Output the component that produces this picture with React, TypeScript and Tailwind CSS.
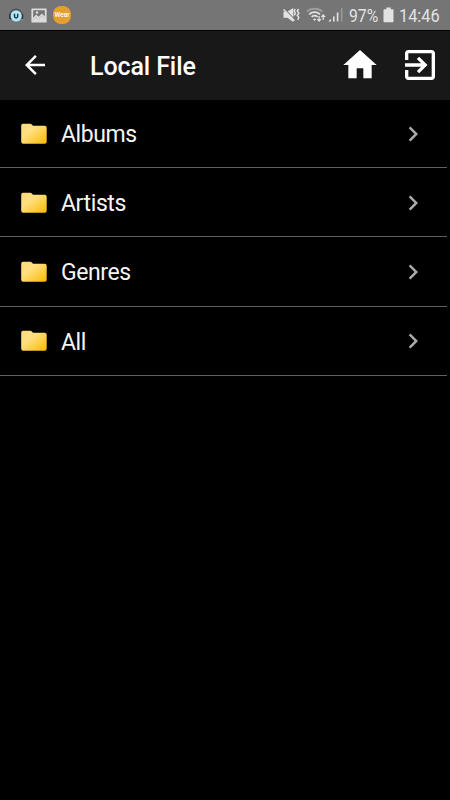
interface Folder {
  id: string;
  name: string;
}

const folders: Folder[] = [
  { id: 'albums', name: 'Albums' },
  { id: 'artists', name: 'Artists' },
  { id: 'genres', name: 'Genres' },
  { id: 'all', name: 'All' },
];

function HeadphonesIcon() {
  return (
    <svg className="h-4 w-4" viewBox="0 0 16 16">
      <path d="M2 8.500a6 6.500 0 0 1 12 0" fill="none" stroke="#484e52" strokeWidth="1.200" />
      <rect x="1" y="6.500" width="2.800" height="6" rx="1.400" fill="#30363a" />
      <rect x="12.500" y="6.500" width="2.800" height="6" rx="1.400" fill="#30363a" />
      <circle cx="8.200" cy="9" r="5.600" fill="#b4e6f8" />
      <path d="M6.500 6.800v2.500a1.600 1.600 0 0 0 3.200 0V6.800" fill="none" stroke="#163c55" strokeWidth="1.500" />
      <circle cx="13.800" cy="13" r="1.500" fill="#6e8792" />
    </svg>
  );
}

function PictureIcon() {
  return (
    <svg className="h-[15px] w-[16px]" viewBox="0 0 16 15">
      <path
        fill="#dcdcdc"
        fillRule="evenodd"
        d="M1 .5h14a.6.6 0 0 1 .6.6v12.800a.6.6 0 0 1-.6.6H1a.6.6 0 0 1-.6-.6V1.100A.6.6 0 0 1 1 .5zM2.200 2.300v7.500l3-3.300 2.500 2.200 3.200-3.200 2.900 3V2.300z"
      />
      <path d="M2.500 11.700l2.700-2.900 2.400 2.400 3.300-3.400 2.600 3.100" fill="none" stroke="#b4b4b4" strokeWidth=".6" />
      <circle cx="6" cy="4.500" r="1.200" fill="#dcdcdc" />
    </svg>
  );
}

function MuteVibrateIcon() {
  return (
    <svg className="h-4 w-[17px]" viewBox="0 0 17 16">
      <path fill="#e2e2e2" d="M.5 4.700h3.500L10.300 1v14l-6-4.200H.5z" />
      <path d="M1.500 1.800l10 10.500" stroke="#757575" strokeWidth="1.200" />
      <path d="M.6 2.500l10.800 11.300" stroke="#e2e2e2" strokeWidth="1.500" />
      <path
        d="M12.200 2l-1 2 1.200 2.200-1.200 2.200M15.500 2l-1.200 2 1.500 2.200-1.500 2.200 1.500 2-1 2.500"
        fill="none"
        stroke="#e2e2e2"
        strokeWidth="1.500"
      />
    </svg>
  );
}

function WifiIcon() {
  return (
    <svg className="h-4 w-5" viewBox="0 0 20 16" fill="none">
      <path d="M.8 4.700a11.500 11.500 0 0 1 15.600 0" stroke="#a0a0a0" strokeWidth="1.600" />
      <path d="M3.200 7.300a8 8 0 0 1 10.800 0M5.600 9.900a4.700 4.700 0 0 1 6 0" stroke="#e2e2e2" strokeWidth="1.700" />
      <path d="M7 12.200q1.600-1.200 3.200 0l-1.600 1.900z" fill="#e2e2e2" />
      <path
        d="M13.100 9v5M11.300 12.200l1.800 2 1.800-2M17.200 13V8.200M15.400 10l1.800-2 1.800 2"
        stroke="#e2e2e2"
        strokeWidth="1.200"
      />
    </svg>
  );
}

function SignalIcon() {
  return (
    <svg className="h-4 w-[15px]" viewBox="0 0 15 16">
      <path fill="#e2e2e2" d="M3 11.800v2.700H.3zM5 9.500h1.600v5H5zM8.800 5.500h1.600v9H8.800z" />
      <path fill="#9b9b9b" d="M12.900 1h1.500v13.500h-1.500z" />
    </svg>
  );
}

function BatteryIcon() {
  return (
    <svg className="h-4 w-[11px]" viewBox="0 0 11 16">
      <path fill="#e2e2e2" d="M3.300.6h4.400v1.700h2q.8 0 .8.800v11.400q0 .8-.8.8H1.300q-.8 0-.8-.8V3.100q0-.8.8-.8h2z" />
    </svg>
  );
}

function FolderIcon() {
  return (
    <svg className="mt-px h-[22px] w-[26px]" viewBox="0 0 26 22">
      <defs>
        <linearGradient id="folder" x1="0" y1="0" x2="1" y2="1">
          <stop offset="0" stopColor="#ffda78" />
          <stop offset="0.350" stopColor="#ffe083" />
          <stop offset="1" stopColor="#fbb900" />
        </linearGradient>
      </defs>
      <path
        fill="url(#folder)"
        d="M2 .8h7.500q.8 0 1.300.6l1.200 1.300h11.700q2 0 2 2v14q0 2-2 2H2.200q-2 0-2-2V2.800Q.2.8 2 .8z"
      />
    </svg>
  );
}

function StatusBar() {
  return (
    <div className="flex h-[30px] items-center bg-[#757575] pr-[10px] pl-[8px] text-[#e2e2e2]">
      <HeadphonesIcon />
      <div className="ml-[7px]">
        <PictureIcon />
      </div>
      <div className="ml-[6px] flex h-[18px] w-[18px] items-center justify-center rounded-[8px] bg-[#e39f32] pt-px text-[6.500px] leading-none font-medium text-white">
        Wear
      </div>
      <div className="ml-auto flex items-center">
        <MuteVibrateIcon />
        <div className="ml-[6px]">
          <WifiIcon />
        </div>
        <div className="ml-[2px]">
          <SignalIcon />
        </div>
        <span className="ml-[6px] w-[31px] text-[19px] leading-none whitespace-nowrap">
          <span className="inline-block origin-left scale-x-[0.83]">97%</span>
        </span>
        <div className="ml-[3px]">
          <BatteryIcon />
        </div>
        <span className="ml-[5px] text-[19px] leading-none">
          <span className="inline-block w-[41px] origin-left scale-x-[0.86]">14:46</span>
        </span>
      </div>
    </div>
  );
}

function Header() {
  return (
    <header className="mt-px flex h-[69px] items-center bg-[#181818] pr-[10px] pb-px pl-5 text-white">
      <button aria-label="Back">
        <svg className="h-[30px] w-[30px]" viewBox="0 0 24 24" fill="currentColor">
          <path d="M20 11H7.830l5.590-5.590L12 4l-8 8 8 8 1.410-1.410L7.830 13H20v-2z" />
        </svg>
      </button>
      <h1 className="ml-10 pt-[3px] text-[25px] leading-[30px] font-medium tracking-[-0.100px]">Local File</h1>
      <div className="ml-auto flex gap-5">
        <button aria-label="Home">
          <svg className="h-10 w-10" viewBox="0 0 24 24" fill="currentColor">
            <path d="M10 20v-6h4v6h5v-8h3L12 3 2 12h3v8z" />
          </svg>
        </button>
        <button aria-label="Exit">
          <svg className="h-10 w-10" viewBox="0 0 24 24" fill="currentColor">
            <path d="M10.090 15.590L11.500 17l5-5-5-5-1.410 1.410L12.670 11H3v2h9.670l-2.580 2.590zM19 3H5c-1.110 0-2 .9-2 2v4h2V5h14v14H5v-4H3v4c0 1.100.89 2 2 2h14c1.100 0 2-.9 2-2V5c0-1.100-.9-2-2-2z" />
          </svg>
        </button>
      </div>
    </header>
  );
}

function FolderRow({ folder }: { folder: Folder }) {
  return (
    <li className="mr-[3px] flex h-[69.200px] items-center border-b border-[#606060] pr-[19px] pl-[21px]">
      <FolderIcon />
      <span className="ml-[14px] pt-[4px] text-[23px] leading-[30px] tracking-[-0.400px] text-[#f5f5f5]">
        {folder.name}
      </span>
      <svg className="mt-px ml-auto h-[30px] w-[30px]" viewBox="0 0 24 24" fill="#aaaaaa">
        <path d="M10 6L8.590 7.410 13.170 12l-4.580 4.590L10 18l6-6z" />
      </svg>
    </li>
  );
}

export default function App() {
  return (
    <div className="h-screen overflow-hidden bg-black font-['Roboto',sans-serif]">
      <StatusBar />
      <Header />
      {/* Folder list */}
      <ul className="-mt-px">
        {folders.map((folder) => (
          <FolderRow key={folder.id} folder={folder} />
        ))}
      </ul>
    </div>
  );
}
